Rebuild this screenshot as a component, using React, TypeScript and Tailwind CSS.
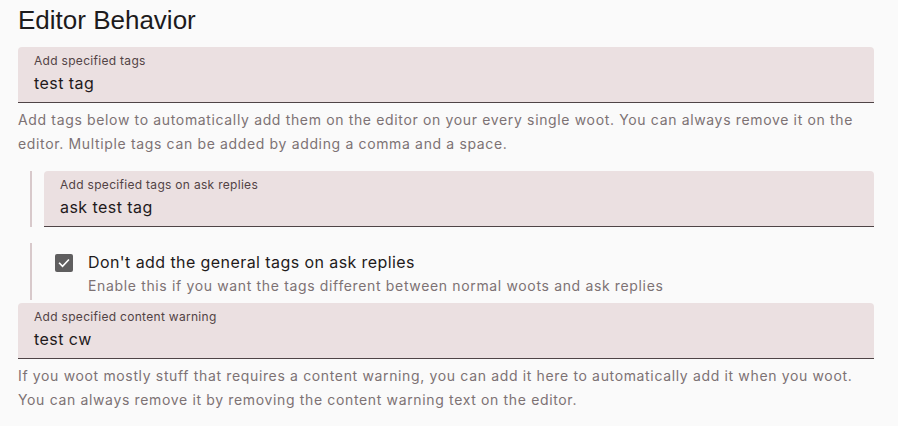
import React from "react";

const inter = { fontFamily: "Inter, 'Noto Sans', sans-serif" };

function FilledField({ label, value }: { label: string; value: string }) {
  return (
    <div className="h-14 rounded-t-[4px] bg-[#ebe0e1] border-b border-[#4f4446] pl-4 pr-4 pt-[6px]">
      <div className="text-[12px] leading-4 tracking-[0.3px] text-[#524345]">{label}</div>
      <div className="mt-[2px] text-[16px] leading-6 tracking-[0.45px] text-[#1f1a1b]">{value}</div>
    </div>
  );
}

function Helper({ children }: { children: React.ReactNode }) {
  return <p className="mt-[5px] text-[14px] leading-6 tracking-[0.65px] text-[#7d7274]">{children}</p>;
}

export default function App() {
  return (
    <div className="min-h-screen w-[898px] h-[426px] overflow-hidden bg-[#fafafa] pl-[18px] pr-[24px] pt-[5px]" style={inter}>
      <h2 className="text-[26px] leading-[30px] text-[#1d1b1c]" style={{ fontFamily: "'Liberation Sans', Arial, sans-serif" }}>
        Editor Behavior
      </h2>

      <div className="mt-3">
        <FilledField label="Add specified tags" value="test tag" />
        <Helper>
          Add tags below to automatically add them on the editor on your every single woot. You can always remove it on the
          editor. Multiple tags can be added by adding a comma and a space.
        </Helper>
      </div>

      <div className="mt-[15px] ml-3 border-l-2 border-[#d8c9cb] pl-3">
        <FilledField label="Add specified tags on ask replies" value="ask test tag" />
      </div>

      <div className="mt-4 ml-3 border-l-2 border-[#d8c9cb] pl-[23px] pt-[7px] pb-[2px] flex gap-[15px]">
        <div className="mt-1 h-[18px] w-[18px] shrink-0 rounded-[2px] bg-[#5f5e5f] flex items-center justify-center">
          <svg width="14" height="14" viewBox="0 0 24 24" fill="none">
            <path d="M4.5 12.5l5 5L19.5 7" stroke="#ffffff" strokeWidth="2.8" strokeLinecap="square" />
          </svg>
        </div>
        <div>
          <div className="text-[16px] leading-6 tracking-[0.42px] text-[#1f1a1b]">Don't add the general tags on ask replies</div>
          <div className="text-[14px] leading-6 tracking-[0.65px] text-[#7d7274]">
            Enable this if you want the tags different between normal woots and ask replies
          </div>
        </div>
      </div>

      <div className="mt-[3px]">
        <FilledField label="Add specified content warning" value="test cw" />
        <Helper>
          If you woot mostly stuff that requires a content warning, you can add it here to automatically add it when you woot.
          You can always remove it by removing the content warning text on the editor.
        </Helper>
      </div>
    </div>
  );
}
